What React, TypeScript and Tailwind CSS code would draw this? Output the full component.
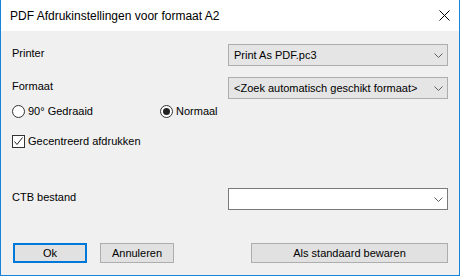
import React from 'react';

const font = { fontFamily: '"Liberation Sans", Arial, sans-serif' };

function Chevron() {
  return (
    <svg width="9" height="5" viewBox="0 0 9 5" className="shrink-0">
      <polyline points="0.5,0.5 4.5,4.5 8.5,0.5" fill="none" stroke="#5f5f5f" strokeWidth="1" />
    </svg>
  );
}

function Combo({ value, white }: { value?: string; white?: boolean }) {
  return (
    <div
      className={
        white
          ? 'w-[220px] h-[22px] flex items-center justify-between pl-[5px] pr-[4px] bg-white border border-[#7a7a7a]'
          : 'w-[220px] h-[22px] flex items-center justify-between pl-[5px] pr-[4px] bg-[#e5e5e5] border border-[#adadad]'
      }
    >
      <span className="text-[11px] leading-4 text-black whitespace-nowrap">{value}</span>
      <Chevron />
    </div>
  );
}

function Radio({ checked, label }: { checked?: boolean; label: string }) {
  return (
    <div className="flex items-center gap-[3px] h-4">
      <div className="w-[13px] h-[13px] rounded-full border border-[#333] bg-white flex items-center justify-center">
        {checked && <div className="w-[7px] h-[7px] rounded-full bg-[#222]" />}
      </div>
      <span className="text-[11px] leading-4 text-black">{label}</span>
    </div>
  );
}

function Button({ label, width, primary }: { label: string; width: string; primary?: boolean }) {
  return (
    <div
      className={
        (primary
          ? 'border-2 border-[#0078d7] '
          : 'border border-[#adadad] ') +
        width +
        ' h-[20px] bg-[#e1e1e1] flex items-center justify-center text-[11px] leading-4 text-black'
      }
    >
      {label}
    </div>
  );
}

export default function App() {
  return (
    <div style={font} className="w-[460px] h-[276px] flex flex-col border-x border-b border-[#1883d7] bg-[#f0f0f0]">
      {/* Title bar */}
      <div className="h-[31px] bg-white flex items-center justify-between pl-[9px] pr-[9px]">
        <span className="text-[12px] text-black">PDF Afdrukinstellingen voor formaat A2</span>
        <svg width="11" height="11" viewBox="0 0 11 11">
          <line x1="0.5" y1="0.5" x2="10.5" y2="10.5" stroke="#000" strokeWidth="1" />
          <line x1="10.5" y1="0.5" x2="0.5" y2="10.5" stroke="#000" strokeWidth="1" />
        </svg>
      </div>

      {/* Body */}
      <div className="flex-1 flex flex-col pl-[11px] pr-[11px]">
        <div className="mt-[13px] flex items-start justify-between">
          <span className="text-[11px] leading-4 pt-[1px] text-black">Printer</span>
          <Combo value="Print As PDF.pc3" />
        </div>

        <div className="mt-[11px] flex items-start justify-between">
          <span className="text-[11px] leading-4 pt-[1px] text-black">Formaat</span>
          <Combo value="<Zoek automatisch geschikt formaat>" />
        </div>

        <div className="mt-[4px] flex items-center">
          <div className="w-[148px]">
            <Radio label="90° Gedraaid" />
          </div>
          <Radio checked label="Normaal" />
        </div>

        <div className="mt-[14px] flex items-center gap-[3px] h-4">
          <div className="w-[13px] h-[13px] border border-[#333] bg-white flex items-center justify-center">
            <svg width="11" height="11" viewBox="0 0 11 11">
              <polyline points="1.5,5.5 4,8.5 9.5,1.5" fill="none" stroke="#222" strokeWidth="1" />
            </svg>
          </div>
          <span className="text-[11px] leading-4 text-black">Gecentreerd afdrukken</span>
        </div>

        <div className="mt-[39px] flex items-start justify-between">
          <span className="text-[11px] leading-4 pt-[1px] text-black">CTB bestand</span>
          <Combo white />
        </div>

        <div className="mt-[33px] flex items-center pl-[1px]">
          <Button label="Ok" width="w-[74px]" primary />
          <div className="ml-[13px]">
            <Button label="Annuleren" width="w-[74px]" />
          </div>
          <div className="ml-auto">
            <Button label="Als standaard bewaren" width="w-[197px]" />
          </div>
        </div>
      </div>
    </div>
  );
}
